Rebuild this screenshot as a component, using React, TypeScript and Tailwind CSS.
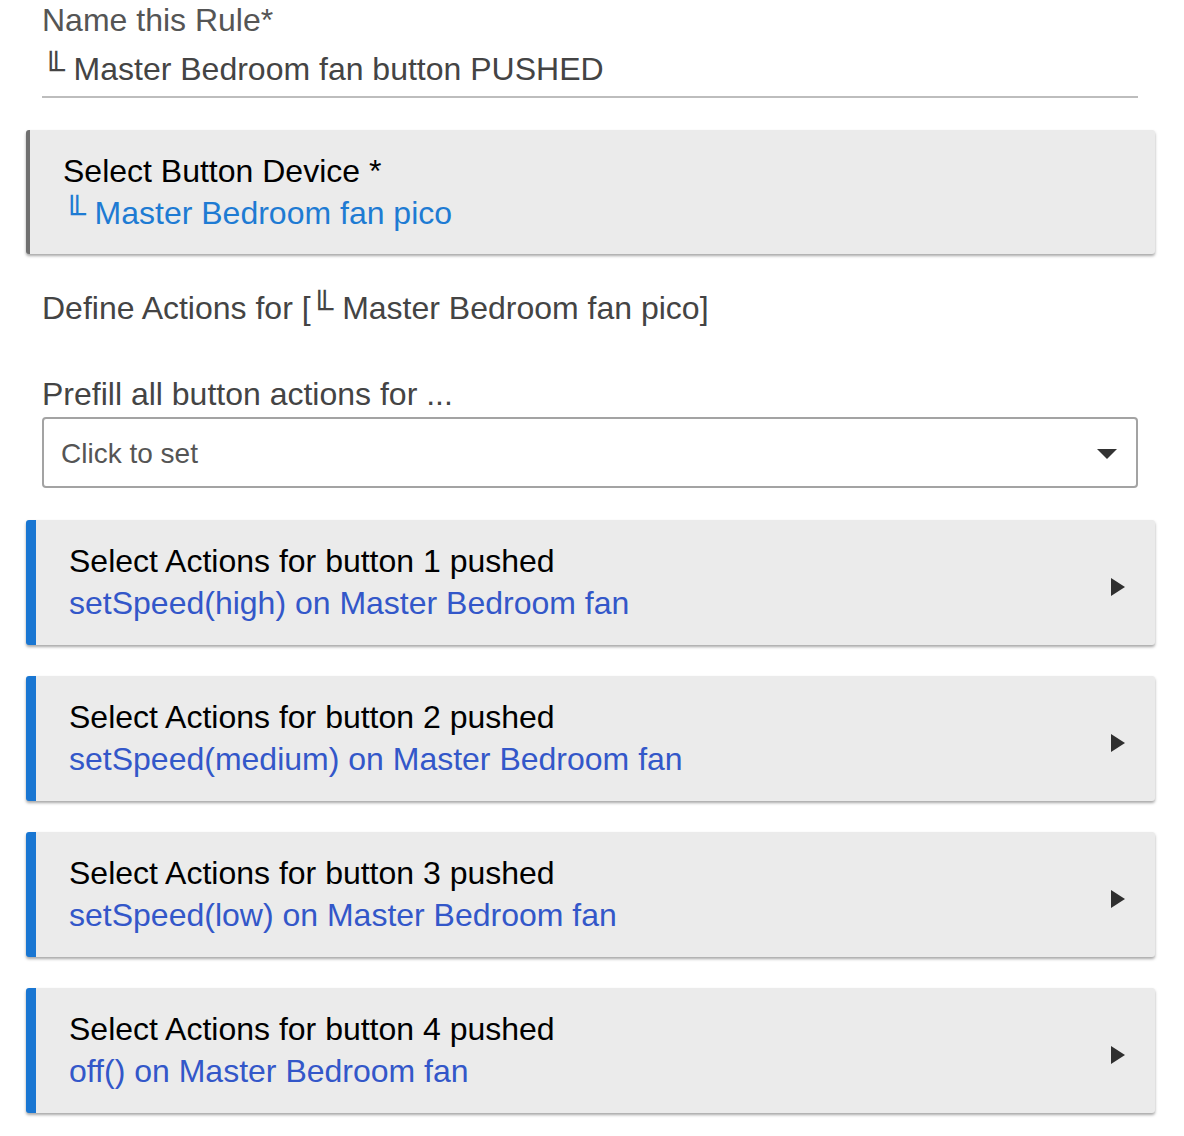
const FONT = { fontFamily: '"Liberation Sans", "DejaVu Sans", Arial, sans-serif' };

const BUTTONS = [
  { n: 1, action: "setSpeed(high) on Master Bedroom fan" },
  { n: 2, action: "setSpeed(medium) on Master Bedroom fan" },
  { n: 3, action: "setSpeed(low) on Master Bedroom fan" },
  { n: 4, action: "off() on Master Bedroom fan" },
];

function ActionCard({ n, action }: { n: number; action: string }) {
  return (
    <div className="-ml-[16px] -mr-[17px] flex items-center rounded-[3px] border-l-[10px] border-[#1976d2] bg-[#ebebeb] pt-[20px] pb-[21px] pl-[33px] pr-[30px] shadow-[0_2px_3px_rgba(0,0,0,0.35)]">
      <div className="flex-1">
        <div className="text-[32px] leading-[42px] text-black">Select Actions for button {n} pushed</div>
        <div className="text-[32px] leading-[42px] text-[#3357c9]">{action}</div>
      </div>
      <svg width="14" height="18" viewBox="0 0 14 18" className="mt-[10px]">
        <path d="M0 0 L14 9 L0 18 Z" fill="#2f2f2f" />
      </svg>
    </div>
  );
}

export default function App() {
  return (
    <div className="min-h-screen bg-white" style={FONT}>
      <div className="ml-[42px] w-[1096px] pb-[24px]">
        {/* Rule name */}
        <div className="border-b-2 border-[#bdbdbd] pb-[7px]">
          <div className="text-[32px] leading-[40px] text-[#555]">Name this Rule*</div>
          <div className="mt-[9px] text-[32px] leading-[40px] text-[#444]">╙ Master Bedroom fan button PUSHED</div>
        </div>

        {/* Button device */}
        <div className="-ml-[16px] -mr-[17px] mt-[32px] rounded-[3px] border-l-4 border-[#707070] bg-[#ebebeb] pt-[20px] pb-[20px] pl-[33px] shadow-[0_2px_3px_rgba(0,0,0,0.35)]">
          <div className="text-[32px] leading-[42px] text-black">Select Button Device *</div>
          <div className="text-[32px] leading-[42px] text-[#1e7bd3]">╙ Master Bedroom fan pico</div>
        </div>

        <div className="mt-[34px] text-[32px] leading-[40px] text-[#444]">Define Actions for [╙ Master Bedroom fan pico]</div>

        <div className="mt-[46px] text-[32px] leading-[40px] text-[#444]">Prefill all button actions for ...</div>

        {/* Prefill select */}
        <div className="mt-[3px] flex h-[71px] items-center rounded-[4px] border-2 border-[#a3a3a3] pl-[17px] pr-[19px] pt-[3px]">
          <span className="flex-1 text-[28px] text-[#555]">Click to set</span>
          <svg width="20" height="10" viewBox="0 0 20 10">
            <path d="M0 0 L20 0 L10 10 Z" fill="#333" />
          </svg>
        </div>

        {/* Button actions */}
        <div className="mt-[32px] flex flex-col gap-[31px]">
          {BUTTONS.map(b => (
            <ActionCard key={b.n} n={b.n} action={b.action} />
          ))}
        </div>
      </div>
    </div>
  );
}
